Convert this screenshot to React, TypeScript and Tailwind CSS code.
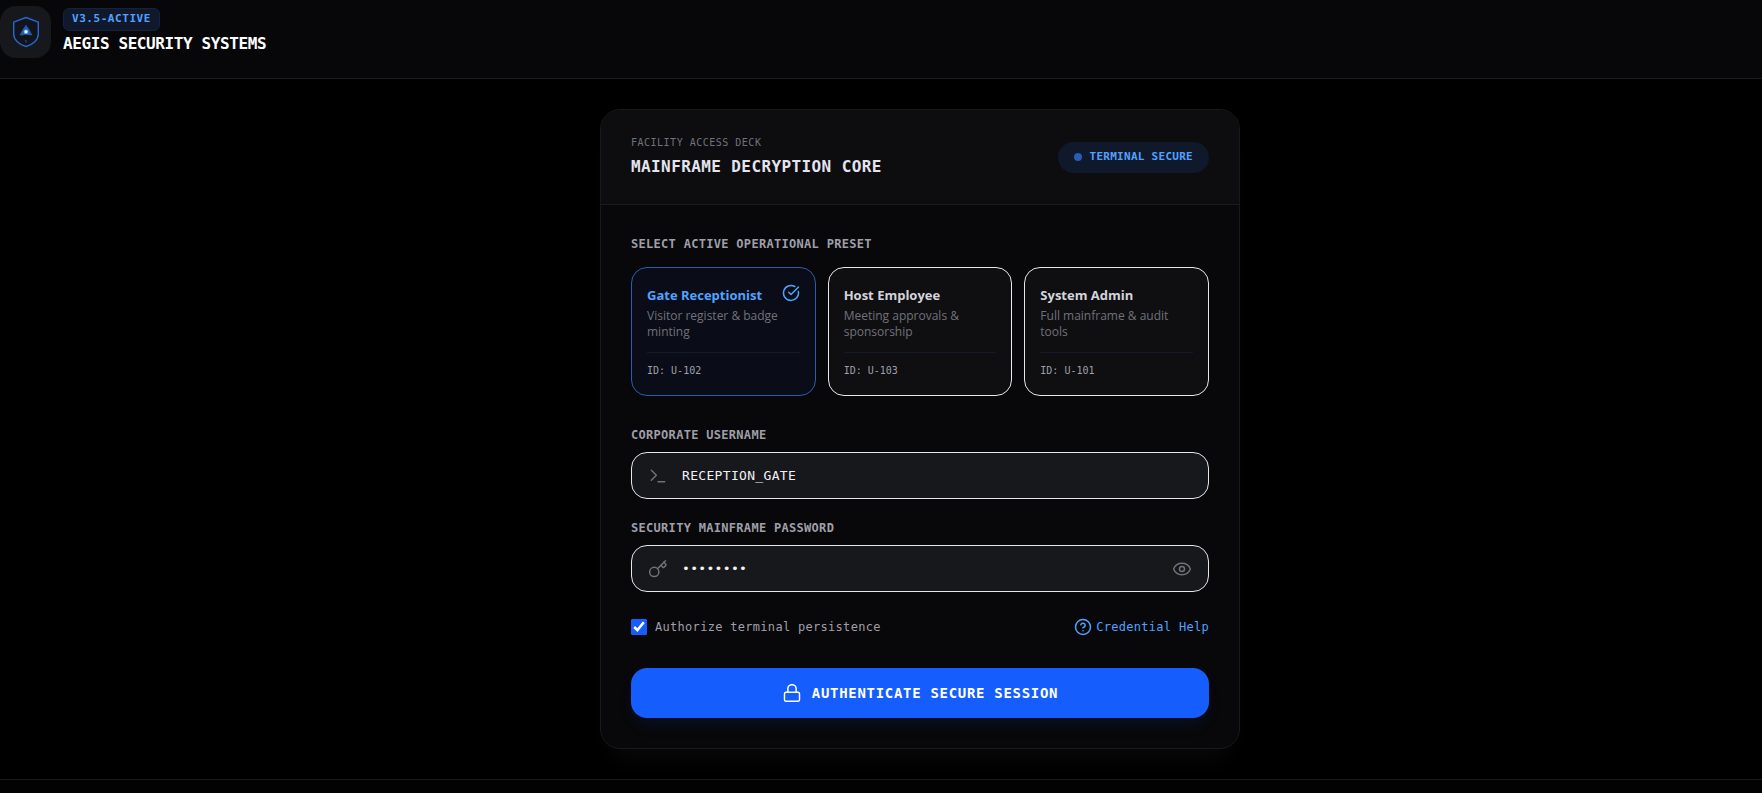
import { useState } from 'react'
import { CircleCheckBig, CircleQuestionMark, Eye, EyeOff, Key, Lock, Terminal } from 'lucide-react'

const presets = [
  { id: 'U-102', name: 'Gate Receptionist', description: 'Visitor register & badge minting', username: 'RECEPTION_GATE' },
  { id: 'U-103', name: 'Host Employee', description: 'Meeting approvals & sponsorship', username: 'HOST_EMPLOYEE' },
  { id: 'U-101', name: 'System Admin', description: 'Full mainframe & audit tools', username: 'SYSTEM_ADMIN' },
]

function ShieldLogo() {
  return (
    <svg viewBox="0 0 28 32" className="h-8 w-7" fill="none" aria-hidden="true">
      <path
        d="M14 1.5 L26.3 6.2 V18 C26.3 24 21 28.7 14 30.5 C7 28.7 1.7 24 1.7 18 V6.2 Z"
        fill="#11141b"
        stroke="#2768cf"
        strokeWidth="1.4"
        strokeLinejoin="round"
      />
      <path d="M14 8.8 L17 13 L20.5 19.3 H16.5 L14 18.3 L11.5 19.3 H7.5 L11 13 Z" fill="#2459ab" />
      <circle cx="14" cy="15.8" r="2.4" fill="#6aaeff" />
      <circle cx="14" cy="15.8" r="1.4" fill="#ffffff" />
      <path d="M13 24 L14 25.5 L15 24 M14 25.5 V27" stroke="#3f4550" strokeWidth="0.8" />
    </svg>
  )
}

function Header() {
  return (
    <header className="border-b border-[#1b1b1e] bg-[#070709] pt-[6px] pb-5">
      <div className="flex items-center gap-3">
        <div className="flex h-[52px] w-[51px] items-center justify-center rounded-2xl bg-[#17181b]">
          <ShieldLogo />
        </div>
        <div className="flex flex-col items-start gap-px">
          <span className="rounded-md border border-[#15213f] bg-[#10182b] px-2 pt-[2px] pb-1 text-[11px] leading-[15px] font-bold tracking-wider text-[#51a2ff]">
            V3.5-ACTIVE
          </span>
          <h1 className="text-base leading-6 font-bold tracking-tight text-white">AEGIS SECURITY SYSTEMS</h1>
        </div>
      </div>
    </header>
  )
}

export default function App() {
  const [activePreset, setActivePreset] = useState('U-102')
  const [username, setUsername] = useState('RECEPTION_GATE')
  const [password, setPassword] = useState('password')
  const [showPassword, setShowPassword] = useState(false)

  return (
    <div className="flex min-h-screen flex-col bg-black font-['DejaVu_Sans_Mono',monospace]">
      <Header />

      <main className="flex justify-center py-[30px] pl-[78px]">
        <div className="w-full max-w-[640px] overflow-hidden rounded-[20px] border border-[#19191c] bg-[#08080a] shadow-[0_20px_24px_-12px_rgba(20,20,24,0.5)]">
          {/* Card header */}
          <div className="flex items-center justify-between border-b border-[#1b1b1f] bg-[#0d0d10] px-[30px] py-[25px]">
            <div className="flex flex-col gap-1">
              <span className="text-[10px] leading-4 tracking-wider text-[#71717b]">FACILITY ACCESS DECK</span>
              <h2 className="text-base leading-6 font-bold tracking-wide text-[#e4e4ee]">MAINFRAME DECRYPTION CORE</h2>
            </div>
            <div className="flex h-[31px] items-center gap-2 rounded-full bg-[#10182b] px-4">
              <span className="h-2 w-2 rounded-full bg-[#2a5cb4]" />
              <span className="text-[11px] font-bold tracking-wide text-[#51a2ff]">TERMINAL SECURE</span>
            </div>
          </div>

          <form className="p-[30px]" onSubmit={(e) => e.preventDefault()}>
            {/* Presets */}
            <h3 className="text-xs leading-[18px] font-bold tracking-wide text-[#9f9fa9]">
              SELECT ACTIVE OPERATIONAL PRESET
            </h3>
            <div className="mt-[14px] grid grid-cols-3 gap-3">
              {presets.map((preset) => {
                const active = preset.id === activePreset
                return (
                  <button
                    key={preset.id}
                    type="button"
                    aria-pressed={active}
                    onClick={() => {
                      setActivePreset(preset.id)
                      setUsername(preset.username)
                    }}
                    className={`rounded-2xl border p-[15px] text-left font-['Open_Sans',sans-serif] ${
                      active ? 'border-[#2a5cb4] bg-[#0a0d17]' : 'border-[#e5e7eb] bg-[#0f0f11]'
                    }`}
                  >
                    <span className="flex h-[22px] items-start justify-between">
                      <span className={`text-[13px] leading-6 font-bold ${active ? 'text-[#51a2ff]' : 'text-[#d4d4dc]'}`}>
                        {preset.name}
                      </span>
                      {active && <CircleCheckBig size={18} className="mt-px text-[#51a2ff]" />}
                    </span>
                    <span className="mt-[3px] block text-xs leading-4 text-[#71717b]">{preset.description}</span>
                    <span className="mt-3 block border-t border-[#151a2b] pt-[9px] font-['DejaVu_Sans_Mono',monospace] text-[10px] leading-[18px] text-[#9f9fa9]">
                      ID: {preset.id}
                    </span>
                  </button>
                )
              })}
            </div>

            {/* Username */}
            <label htmlFor="username" className="mt-[30px] block text-xs leading-[18px] font-bold tracking-wide text-[#9f9fa9]">
              CORPORATE USERNAME
            </label>
            <div className="mt-2 flex h-[47px] items-center gap-[14px] rounded-2xl border border-[#e5e7eb] bg-[#17181b] px-4">
              <Terminal size={20} strokeWidth={1.75} className="shrink-0 text-[#71717b]" />
              <input
                id="username"
                type="text"
                value={username}
                onChange={(e) => setUsername(e.target.value)}
                className="min-w-0 flex-1 bg-transparent text-[13px] tracking-wide text-[#f1f1f5] outline-none"
              />
            </div>

            {/* Password */}
            <label htmlFor="password" className="mt-5 block text-xs leading-[18px] font-bold tracking-wide text-[#9f9fa9]">
              SECURITY MAINFRAME PASSWORD
            </label>
            <div className="mt-2 flex h-[47px] items-center gap-[14px] rounded-2xl border border-[#e5e7eb] bg-[#17181b] px-4">
              <Key size={20} strokeWidth={1.75} className="shrink-0 text-[#71717b]" />
              <input
                id="password"
                type={showPassword ? 'text' : 'password'}
                value={password}
                onChange={(e) => setPassword(e.target.value)}
                className="min-w-0 flex-1 bg-transparent text-[13px] tracking-wide text-[#f1f1f5] outline-none"
              />
              <button type="button" aria-label="Toggle password" onClick={() => setShowPassword(!showPassword)} className="text-[#71717b]">
                {showPassword ? <EyeOff size={20} strokeWidth={1.75} /> : <Eye size={20} strokeWidth={1.75} />}
              </button>
            </div>

            <div className="mt-[26px] flex items-center justify-between text-xs leading-[18px] tracking-wide">
              <label className="flex items-center gap-2 text-[#9f9fa9]">
                <input type="checkbox" defaultChecked className="h-4 w-4 accent-[#155dfc]" />
                Authorize terminal persistence
              </label>
              <a href="#help" className="flex items-center gap-1 text-[#51a2ff]">
                <CircleQuestionMark size={18} />
                Credential Help
              </a>
            </div>

            <button
              type="submit"
              className="mt-8 flex h-[50px] w-full items-center justify-center gap-[10px] rounded-2xl bg-[#155dfc] text-sm font-bold tracking-wider text-white shadow-[0_10px_15px_-3px_rgba(21,93,252,0.1)]"
            >
              <Lock size={20} strokeWidth={1.75} />
              AUTHENTICATE SECURE SESSION
            </button>
          </form>
        </div>
      </main>

      <footer className="flex-1 border-t border-[#1b1b1e] bg-[#020203]" />
    </div>
  )
}
